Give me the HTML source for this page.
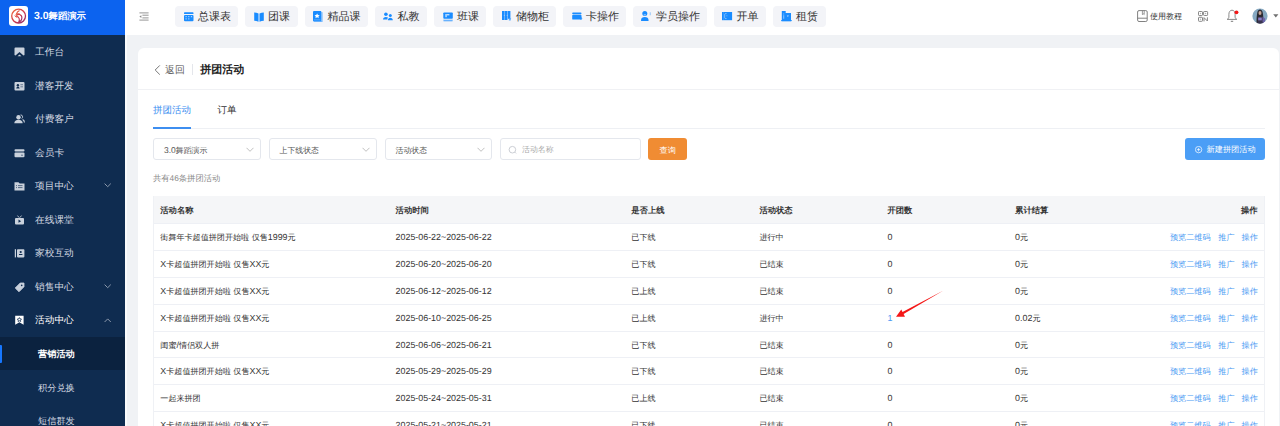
<!DOCTYPE html>
<html><head><meta charset="utf-8">
<style>
*{box-sizing:border-box;margin:0;padding:0}
i{font-style:normal}
html,body{width:1280px;height:426px;overflow:hidden;background:#f0f2f5;font-family:"Liberation Sans",sans-serif;color:#333;text-rendering:geometricPrecision}
#side{position:absolute;left:0;top:0;width:125px;height:426px;background:#0f2c50;overflow:hidden}
#logo{position:absolute;left:0;top:0;width:125px;height:35px;background:#0c63ef}
#logo .ic{position:absolute;left:9px;top:6px;width:19px;height:20px;background:#fff;border-radius:3px}
#logo .t{position:absolute;left:34px;top:8px;font-size:10.5px;font-weight:bold;color:#fff;line-height:16px;white-space:nowrap}
.mi{position:absolute;left:0;width:125px;height:33.55px;color:#d3d9e2;font-size:9.7px;font-weight:500;line-height:35.5px;white-space:nowrap}
.mi .tx{position:absolute;left:35px;top:0}
.mi svg{position:absolute;left:13.5px;top:12px}
.mi .chev{position:absolute;left:104.2px;top:14.2px}
.mi.sub .tx{left:38px;font-size:9.2px}
.mi.active{background:#0b223f;color:#fff;font-weight:bold}
.mi.active:before{content:"";position:absolute;left:0;top:8px;width:2px;height:18px;background:#1677ff;border-radius:0 1px 1px 0}
.mi.open{color:#fff}
#top{position:absolute;left:125px;top:0;width:1155px;height:35px;background:#fff}
#top:before{content:"";position:absolute;left:0;top:0;width:2px;height:35px;background:#fff}
.tab{position:absolute;top:6px;height:21px;background:#f3f4f8;border-radius:4px;font-size:11px;line-height:23px;color:#333;white-space:nowrap}
.tab svg{position:absolute;left:9px;top:5.5px}
.tab .tx{position:absolute;left:23px;top:0}
#card{position:absolute;left:138px;top:48px;width:1141px;height:400px;background:#fff;border-radius:6px}
.sel{position:absolute;top:138px;height:22px;border:1px solid #e4e7ed;border-radius:3px;background:#fff;font-size:8.5px;line-height:22px;color:#555;white-space:nowrap}
.sel .tx{position:absolute;left:10px;top:0}
.sel svg{position:absolute;right:6px;top:7.5px}
.row{position:absolute;left:153px;width:1112px;height:27px;border-top:1px solid #eef0f5;font-size:8.9px;line-height:26px;color:#333;white-space:nowrap}
.row span{position:absolute;top:0}
.hdr{position:absolute;left:153px;top:196px;width:1112px;height:27px;background:#f5f6f8;font-size:8.3px;line-height:29.4px;font-weight:bold;color:#333;white-space:nowrap}
.hdr span{position:absolute;top:0}
.lk{color:#4a9af3}
</style></head><body>
<div id="side">
  <div id="logo"><div class="ic"><svg width="19" height="20" viewBox="0 0 19 20"><defs><linearGradient id="lg" x1="0" y1="0" x2="1" y2="1"><stop offset="0" stop-color="#f06a3a"/><stop offset="0.5" stop-color="#d23a4a"/><stop offset="1" stop-color="#8a2a70"/></linearGradient></defs><circle cx="9.6" cy="10.1" r="6.9" stroke="url(#lg)" stroke-width="1.3" fill="none"/><path d="M10.5 4.6c-1.6 0.8-2.6 2-3.2 3.6 1.2-0.3 2.4-0.4 3.4-0.1-1.4 0.2-2.8 0.9-3.6 1.9 1.5 0.2 2.7 1.1 3.1 2.6 0.3 1.2 0 2.6-0.6 3.6 1.8-0.6 3.2-2.2 3.3-4.2 0.1-1.6-0.8-3-2.2-3.6" stroke="url(#lg)" stroke-width="1.1" fill="none"/><path d="M5.8 9.6c0.6 1 1.6 1.6 2.6 1.6" stroke="#e04040" stroke-width="1" fill="none"/></svg></div><div class="t">3.0<i style="font-size:0.886em">舞蹈演示</i></div></div>

  <div class="mi" style="top:35.00px"><svg width="11" height="10" viewBox="0 0 11 10"><path d="M1.5 0.5h8a1 1 0 0 1 1 1v6.5l-1 0.5-4-3.6-4 3.6-1-0.5v-6.5a1 1 0 0 1 1-1z" fill="#c9d1dc"/><path d="M3.6 9.2l1.9-1.8 1.9 1.8z" fill="#c9d1dc"/></svg><span class="tx">工作台</span></div>
  <div class="mi" style="top:68.55px"><svg width="11" height="10" viewBox="0 0 11 10"><rect x="0.5" y="1" width="10" height="8.5" rx="1" fill="#c9d1dc"/><circle cx="3.9" cy="4.2" r="1.2" fill="#0f2c50"/><path d="M2.2 7.6c0.2-1.5 1-2.2 1.7-2.2s1.5 0.7 1.7 2.2z" fill="#0f2c50"/><rect x="6.4" y="3.2" width="2.6" height="1" fill="#0f2c50" opacity=".5"/><rect x="6.4" y="5.3" width="2.6" height="1" fill="#0f2c50" opacity=".5"/></svg><span class="tx">潜客开发</span></div>
  <div class="mi" style="top:102.10px"><svg width="11" height="10" viewBox="0 0 11 10"><circle cx="4.5" cy="3.3" r="2.2" fill="#c9d1dc"/><path d="M0.3 9.3c0-2.2 1.8-3.5 4.2-3.5s4.2 1.3 4.2 3.5z" fill="#c9d1dc"/><path d="M6.6 0.9a2 2 0 0 1 1.2 3.6" stroke="#c9d1dc" stroke-width="1" fill="none"/><path d="M8.6 5.6c1.1 0.5 1.8 1.5 1.8 3" stroke="#c9d1dc" stroke-width="1.1" fill="none"/></svg><span class="tx">付费客户</span></div>
  <div class="mi" style="top:135.65px"><svg width="11" height="10" viewBox="0 0 11 10"><rect x="0.5" y="1.3" width="10" height="2.2" rx="1" fill="#c9d1dc"/><rect x="0.5" y="4.6" width="10" height="4.6" rx="1" fill="#c9d1dc"/><circle cx="8" cy="7.2" r="0.6" fill="#0f2c50"/></svg><span class="tx">会员卡</span></div>
  <div class="mi" style="top:169.20px"><svg width="11" height="10" viewBox="0 0 11 10"><path d="M0.5 1.2h4l1.2 1.2h4.8v7.2h-10z" fill="#c9d1dc"/><rect x="2" y="4.2" width="1" height="0.9" fill="#0f2c50" opacity=".7"/><rect x="4" y="4.2" width="4.5" height="0.9" fill="#0f2c50" opacity=".7"/><rect x="2" y="6.2" width="1" height="0.9" fill="#0f2c50" opacity=".7"/><rect x="4" y="6.2" width="4.5" height="0.9" fill="#0f2c50" opacity=".7"/></svg><span class="tx">项目中心</span><svg class="chev" width="8" height="5" viewBox="0 0 8 5"><path d="M0.6 0.6l3.1 3.1 3.1-3.1" stroke="#9aa6b8" stroke-width="0.9" fill="none"/></svg></div>
  <div class="mi" style="top:202.75px"><svg width="11" height="10" viewBox="0 0 11 10"><rect x="1" y="3" width="9" height="6.5" rx="1" fill="#c9d1dc"/><path d="M3.5 0.6l1.6 2M7.5 0.6l-1.6 2" stroke="#c9d1dc" stroke-width="0.9"/><path d="M4.5 4.6v3.2l2.6-1.6z" fill="#0f2c50"/></svg><span class="tx">在线课堂</span></div>
  <div class="mi" style="top:236.30px"><svg width="11" height="10" viewBox="0 0 11 10"><rect x="0.8" y="1.2" width="1.2" height="8.2" fill="#c9d1dc"/><rect x="3" y="1.2" width="7.4" height="8.2" rx="0.8" fill="#c9d1dc"/><circle cx="6.7" cy="4" r="1.1" fill="#0f2c50"/><rect x="5" y="6" width="3.4" height="1" fill="#0f2c50"/></svg><span class="tx">家校互动</span></div>
  <div class="mi" style="top:269.85px"><svg width="11" height="10" viewBox="0 0 11 10"><path d="M6.2 1h3.8v3.8l-5 5-3.8-3.8z" fill="#c9d1dc" stroke="#c9d1dc" stroke-width="0.8" stroke-linejoin="round"/><circle cx="7.7" cy="3.4" r="0.8" fill="#0f2c50"/></svg><span class="tx">销售中心</span><svg class="chev" width="8" height="5" viewBox="0 0 8 5"><path d="M0.6 0.6l3.1 3.1 3.1-3.1" stroke="#9aa6b8" stroke-width="0.9" fill="none"/></svg></div>
  <div class="mi open" style="top:303.40px"><svg width="11" height="10" viewBox="0 0 11 10"><path d="M1.2 0.8h8.4v9l-4.2-2.6-4.2 2.6z" fill="#fff"/><path d="M5.4 2.6l0.7 1.3 1.4 0.2-1 1 0.2 1.4-1.3-0.7-1.3 0.7 0.2-1.4-1-1 1.4-0.2z" fill="none" stroke="#0f2c50" stroke-width="0.8"/></svg><span class="tx">活动中心</span><svg class="chev" width="8" height="5" viewBox="0 0 8 5" style="top:14.4px"><path d="M0.6 4l3.1-3.1 3.1 3.1" stroke="#9aa6b8" stroke-width="0.9" fill="none"/></svg></div>
  <div class="mi active sub" style="top:336.95px"><span class="tx">营销活动</span></div>
  <div class="mi sub" style="top:370.50px"><span class="tx">积分兑换</span></div>
  <div class="mi sub" style="top:404.05px"><span class="tx">短信群发</span></div>
</div>
<div id="top">
<svg style="position:absolute;left:13.5px;top:11.5px" width="11" height="10" viewBox="0 0 11 10"><path d="M0.4 0.9h9.2M3.4 3.2h6.2M3.4 5.9h6.2M0.4 8.1h9.2" stroke="#8a8a8a" stroke-width="0.9"/><path d="M0.4 4.6l2-1.3v2.6z" fill="#8a8a8a"/></svg>
<div class="tab" style="left:50px;width:63px"><svg width="10" height="10" viewBox="0 0 10 10"><rect x="0" y="0.3" width="9.5" height="1.8" rx="0.7" fill="#1a8cff"/><rect x="0" y="2.9" width="9.5" height="6.3" rx="1" fill="#1a8cff"/><g fill="#fff" opacity=".75"><rect x="1.5" y="4.2" width="1.2" height="1"/><rect x="4.2" y="4.2" width="1.2" height="1"/><rect x="6.9" y="4.2" width="1.2" height="1"/><rect x="1.5" y="6.4" width="1.2" height="1"/><rect x="4.2" y="6.4" width="1.2" height="1"/></g></svg><span class="tx">总课表</span></div>
<div class="tab" style="left:120px;width:52.5px"><svg width="10" height="10" viewBox="0 0 10 10"><path d="M0.2 0.6c1.4 0 3 0.3 4.3 1v8.2c-1.3-0.7-2.9-1-4.3-1z" fill="#1a8cff"/><path d="M9.8 0.6c-1.4 0-3 0.3-4.3 1v8.2c1.3-0.7 2.9-1 4.3-1z" fill="#1a8cff"/></svg><span class="tx">团课</span></div>
<div class="tab" style="left:179.5px;width:63px"><svg style="left:8.5px;top:4.6px" width="11" height="12" viewBox="0 0 11 12"><path d="M0 1a1 1 0 0 1 1-1h7.2v10.4h-7.2a1 1 0 0 1-1-1z" fill="#1a8cff"/><path d="M8.2 1h0.8a0.6 0.6 0 0 1 0.6 0.6v9.4h-8.6v-0.6h7.2z" fill="#1a8cff" opacity=".55"/><path d="M4.1 2.4l0.85 1.6 1.75 0.25-1.27 1.2 0.3 1.75-1.63-0.85-1.63 0.85 0.3-1.75-1.27-1.2 1.75-0.25z" fill="#fff"/><rect x="0.8" y="8.6" width="6.6" height="0.6" fill="#fff" opacity=".45"/></svg><span class="tx">精品课</span></div>
<div class="tab" style="left:249.5px;width:52.5px"><svg style="left:8px;top:5.8px" width="11" height="9" viewBox="0 0 11 9"><circle cx="2.9" cy="2.3" r="1.8" fill="#1a8cff"/><circle cx="7.3" cy="3.5" r="1.5" fill="#1a8cff"/><path d="M0 7.6c0-1.7 1.2-2.6 2.9-2.6 0.9 0 1.6 0.2 2.1 0.6-0.4 0.5-0.6 1.1-0.6 2z" fill="#1a8cff"/><path d="M4.9 8.2c0-1.6 1-2.5 2.4-2.5s2.5 0.9 2.5 2.5z" fill="#1a8cff"/></svg><span class="tx">私教</span></div>
<div class="tab" style="left:309px;width:52px"><svg width="10" height="10" viewBox="0 0 10 10"><rect x="0.3" y="0.5" width="9.5" height="6.2" rx="0.8" fill="#1a8cff"/><rect x="2.3" y="2" width="1.5" height="3.2" fill="#fff" opacity=".7"/><rect x="3.8" y="2" width="2.6" height="1.4" fill="#fff" opacity=".7"/><rect x="0.3" y="7.2" width="9.5" height="0.6" fill="#1a8cff" opacity=".35"/><rect x="0.3" y="8.3" width="9.5" height="0.9" rx="0.4" fill="#1a8cff" opacity=".85"/></svg><span class="tx">班课</span></div>
<div class="tab" style="left:368px;width:63px"><svg style="left:8.6px;top:5.4px" width="11" height="10" viewBox="0 0 11 10"><rect x="0" y="0" width="2.6" height="9" fill="#1a8cff"/><rect x="2.9" y="0" width="2.6" height="9" fill="#1a8cff"/><rect x="5.8" y="0" width="2.6" height="7.8" fill="#1a8cff"/><circle cx="2.2" cy="4.3" r="0.45" fill="#fff" opacity=".8"/><circle cx="5.1" cy="4.3" r="0.45" fill="#fff" opacity=".8"/><path d="M6.3 8.9l3-2.2-1 3z" fill="#1a8cff" opacity=".75"/></svg><span class="tx">储物柜</span></div>
<div class="tab" style="left:438px;width:63px"><svg width="11" height="10" viewBox="0 0 11 10"><rect x="0.2" y="0.6" width="9.3" height="1.6" rx="0.8" fill="#1a8cff"/><rect x="0.2" y="2.8" width="9.3" height="4.8" rx="0.9" fill="#1a8cff"/><circle cx="9" cy="6.5" r="1.2" fill="#1a8cff" opacity=".7"/></svg><span class="tx">卡操作</span></div>
<div class="tab" style="left:508px;width:73.5px"><svg style="left:8.1px;top:4.8px" width="11" height="11" viewBox="0 0 11 11"><circle cx="3.8" cy="2.6" r="2.5" fill="#1a8cff"/><path d="M2.6 3.2a1.2 1.2 0 0 0 2.4 0z" fill="#fff" opacity=".55"/><path d="M0 9.4c0-2.2 1.6-3.3 3.8-3.3s3.8 1.1 3.8 3.3a0.7 0.7 0 0 1-0.7 0.7h-6.2a0.7 0.7 0 0 1-0.7-0.7z" fill="#1a8cff"/><rect x="8.7" y="1.2" width="1.1" height="3" rx="0.3" fill="#1a8cff" opacity=".4"/></svg><span class="tx">学员操作</span></div>
<div class="tab" style="left:588.5px;width:52.5px"><svg style="left:8.5px;top:5.8px" width="11" height="9" viewBox="0 0 11 9"><rect x="0" y="0" width="10.1" height="8.2" fill="#1a8cff"/><path d="M4.6 1.6h-1a0.9 0.9 0 0 0-0.9 0.9v3.2a0.9 0.9 0 0 0 0.9 0.9h1" stroke="#fff" stroke-width="0.55" fill="none" opacity=".75"/><rect x="1.5" y="0" width="0.5" height="8.2" fill="#fff" opacity=".2"/><rect x="4.3" y="3.6" width="1.1" height="0.6" fill="#fff" opacity=".6"/></svg><span class="tx">开单</span></div>
<div class="tab" style="left:648px;width:52.5px"><svg style="left:8.1px;top:5px" width="12" height="11" viewBox="0 0 12 11"><path d="M0.8 0h3.9v2h5.3v8.3h-9.2z" fill="#1a8cff"/><rect x="0" y="9.2" width="10.9" height="0.9" fill="#1a8cff"/><rect x="2.3" y="2.6" width="0.9" height="0.8" fill="#fff" opacity=".7"/><rect x="2.3" y="4.2" width="0.9" height="3.6" fill="#fff" opacity=".55"/><path d="M5.8 4.4h2.1l-1.05 1.6z" fill="#fff" opacity=".7"/></svg><span class="tx">租赁</span></div>
<svg style="position:absolute;left:1012.3px;top:10px" width="12" height="13" viewBox="0 0 12 13"><rect x="0.6" y="0.6" width="9.6" height="10.9" rx="1.4" stroke="#7a7a7a" stroke-width="0.95" fill="none"/><path d="M0.6 8.2h9.6" stroke="#7a7a7a" stroke-width="0.95"/><path d="M5.4 0.8v3.8l0.9-0.8 0.9 0.8v-3.8" stroke="#7a7a7a" stroke-width="0.75" fill="none"/></svg>
<span style="position:absolute;left:1025px;top:9.8px;font-size:8px;line-height:14px;color:#333;white-space:nowrap">使用教程</span>
<svg style="position:absolute;left:1073.3px;top:10.5px" width="11" height="11" viewBox="0 0 11 11"><g stroke="#7f7f7f" stroke-width="0.95" fill="none"><rect x="0.5" y="0.5" width="4" height="4" rx="0.7"/><rect x="5.6" y="0.5" width="4" height="4" rx="0.7"/><rect x="0.5" y="6.3" width="4" height="4" rx="0.7"/><path d="M6 10.4V6.6L9.4 10V6.3"/></g><g fill="#7f7f7f" opacity=".6"><circle cx="2.5" cy="2.5" r="0.7"/><circle cx="7.6" cy="2.5" r="0.7"/><circle cx="2.5" cy="8.3" r="0.7"/></g></svg>
<svg style="position:absolute;left:1101px;top:9px" width="13" height="14" viewBox="0 0 13 14"><path d="M6 1.2C4 1.2 2.9 3 2.9 5.3V8C2.9 9 2.1 9.8 1.2 10.4H10.8C9.9 9.8 9.1 9 9.1 8V5.3C9.1 3 8 1.2 6 1.2z" stroke="#7a7a7a" stroke-width="0.9" fill="none" stroke-linejoin="round"/><path d="M4.8 12.3h2.4" stroke="#7a7a7a" stroke-width="1"/><circle cx="10.5" cy="3.3" r="1.9" fill="#f51818"/></svg>
<svg style="position:absolute;left:1127px;top:7.8px" width="16" height="16" viewBox="0 0 16 16"><defs><clipPath id="av"><circle cx="8" cy="8" r="7.6"/></clipPath></defs><g clip-path="url(#av)"><rect width="16" height="16" fill="#86a9c2"/><path d="M4.5 16c0-5 0.2-9 0.8-11.5C5.8 2.5 6.8 1.6 8 1.6s2.3 0.9 2.7 2.9c0.6 2.5 0.8 6.5 0.8 11.5z" fill="#2b2a33"/><ellipse cx="8" cy="5" rx="1.5" ry="2" fill="#c8a496"/><path d="M6.2 9.5h3.6v3.2h-3.6z" fill="#8a7cc8"/><path d="M10.5 8.5l2.8 2.2-1 5.3h-2z" fill="#6c62a8"/><path d="M4.8 16l1.4-3.4h3.6l1.4 3.4z" fill="#3a3550"/></g></svg>
<svg style="position:absolute;left:1147.5px;top:13.8px" width="6" height="5" viewBox="0 0 6 5"><path d="M0.2 0.2h5.2l-2.6 3.4z" fill="#707070"/></svg>

</div>
<div style="position:absolute;left:125px;top:35px;width:2px;height:391px;background:#fafbfc"></div>
<div id="card"></div>
<svg style="position:absolute;left:153.8px;top:64.5px" width="7" height="10" viewBox="0 0 7 10"><path d="M5.8 0.4l-4.6 4.6 4.6 4.6" stroke="#666" stroke-width="0.9" fill="none"/></svg>
<span style="position:absolute;left:165px;top:63.5px;font-size:9.9px;line-height:14px;color:#666;white-space:nowrap">返回</span>
<div style="position:absolute;left:192px;top:64px;width:1px;height:10.5px;background:#e4e6eb"></div>
<span style="position:absolute;left:200.3px;top:62px;font-size:11px;line-height:16px;color:#222;font-weight:bold;white-space:nowrap">拼团活动</span>
<div style="position:absolute;left:138px;top:89px;width:1141px;height:1px;background:#f0f1f4"></div>
<span style="position:absolute;left:153px;top:103.5px;font-size:9.5px;line-height:14px;color:#3d8ef0;white-space:nowrap">拼团活动</span>
<span style="position:absolute;left:217.5px;top:103.5px;font-size:9.5px;line-height:14px;color:#333;white-space:nowrap">订单</span>
<div style="position:absolute;left:153px;top:128px;width:1112px;height:1px;background:#eef0f4"></div>
<div style="position:absolute;left:153px;top:127px;width:38px;height:2px;background:#3d8ef0"></div>

<div class="sel" style="left:153px;width:108px"><span class="tx">3.0<i style="font-size:0.93em">舞蹈演示</i></span><svg width="8" height="6" viewBox="0 0 8 6"><path d="M0.5 0.8l3.5 3.5 3.5-3.5" stroke="#b0b0b0" stroke-width="0.8" fill="none"/></svg></div>
<div class="sel" style="left:268.5px;width:108px"><span class="tx"><i style="font-size:0.93em">上下线状态</i></span><svg width="8" height="6" viewBox="0 0 8 6"><path d="M0.5 0.8l3.5 3.5 3.5-3.5" stroke="#b0b0b0" stroke-width="0.8" fill="none"/></svg></div>
<div class="sel" style="left:384.5px;width:107.5px"><span class="tx"><i style="font-size:0.93em">活动状态</i></span><svg width="8" height="6" viewBox="0 0 8 6"><path d="M0.5 0.8l3.5 3.5 3.5-3.5" stroke="#b0b0b0" stroke-width="0.8" fill="none"/></svg></div>
<div class="sel" style="left:500px;width:140.5px"><svg style="position:absolute;left:7px;top:5.5px" width="10" height="10" viewBox="0 0 10 10"><circle cx="4.4" cy="4.7" r="3.3" stroke="#c2c5cc" stroke-width="0.85" fill="none"/><path d="M6.8 7.1l1.3 1.3" stroke="#c2c5cc" stroke-width="0.85"/></svg><span class="tx" style="left:21px;color:#aaa;font-size:7.9px">活动名称</span></div>
<div style="position:absolute;left:648.3px;top:138.3px;width:38.8px;height:21.5px;background:#f08c33;border-radius:3px;color:#fff;font-size:8.2px;font-weight:500;line-height:25.5px;text-align:center">查询</div>
<div style="position:absolute;left:1184.5px;top:138px;width:80.5px;height:22px;background:#4b9ef6;border-radius:3px;color:#fff;font-size:8.2px;line-height:22px;white-space:nowrap"><svg style="position:absolute;left:10px;top:8.2px" width="8" height="8" viewBox="0 0 8 8"><circle cx="3.6" cy="3.6" r="3.2" stroke="#fff" stroke-width="0.7" fill="none"/><path d="M3.6 1.9v3.4M1.9 3.6h3.4" stroke="#fff" stroke-width="0.7"/></svg><span style="position:absolute;left:22px;top:0.8px;font-weight:500">新建拼团活动</span></div>
<span style="position:absolute;left:153px;top:171px;font-size:8.3px;line-height:14px;color:#888;white-space:nowrap">共有46条拼团活动</span>

<div class="hdr"><span style="left:7.3px">活动名称</span><span style="left:242.6px">活动时间</span><span style="left:478.3px">是否上线</span><span style="left:606.4px">活动状态</span><span style="left:734.5px">开团数</span><span style="left:862.1px">累计结算</span><span style="right:7.5px">操作</span></div>
<div class="row" style="top:223.00px"><span style="left:7.3px"><i style="font-size:0.91em">街舞年卡超值拼团开始啦</i> <i style="font-size:0.91em">仅售</i>1999<i style="font-size:0.91em">元</i></span><span style="left:242.6px">2025-06-22~2025-06-22</span><span style="left:478.3px"><i style="font-size:0.91em">已下线</i></span><span style="left:606.4px"><i style="font-size:0.91em">进行中</i></span><span style="left:734.5px">0</span><span style="left:862.1px">0<i style="font-size:0.91em">元</i></span><span class="lk" style="left:1017px;top:0.8px;font-size:8.1px">预览二维码</span><span class="lk" style="left:1065.3px;top:0.8px;font-size:8.1px">推广</span><span class="lk" style="left:1088.6px;top:0.8px;font-size:8.1px">操作</span></div>
<div class="row" style="top:250.00px"><span style="left:7.3px">X<i style="font-size:0.91em">卡超值拼团开始啦</i> <i style="font-size:0.91em">仅售</i>XX<i style="font-size:0.91em">元</i></span><span style="left:242.6px">2025-06-20~2025-06-20</span><span style="left:478.3px"><i style="font-size:0.91em">已下线</i></span><span style="left:606.4px"><i style="font-size:0.91em">已结束</i></span><span style="left:734.5px">0</span><span style="left:862.1px">0<i style="font-size:0.91em">元</i></span><span class="lk" style="left:1017px;top:0.8px;font-size:8.1px">预览二维码</span><span class="lk" style="left:1065.3px;top:0.8px;font-size:8.1px">推广</span><span class="lk" style="left:1088.6px;top:0.8px;font-size:8.1px">操作</span></div>
<div class="row" style="top:277.00px"><span style="left:7.3px">X<i style="font-size:0.91em">卡超值拼团开始啦</i> <i style="font-size:0.91em">仅售</i>XX<i style="font-size:0.91em">元</i></span><span style="left:242.6px">2025-06-12~2025-06-12</span><span style="left:478.3px"><i style="font-size:0.91em">已上线</i></span><span style="left:606.4px"><i style="font-size:0.91em">已结束</i></span><span style="left:734.5px">0</span><span style="left:862.1px">0<i style="font-size:0.91em">元</i></span><span class="lk" style="left:1017px;top:0.8px;font-size:8.1px">预览二维码</span><span class="lk" style="left:1065.3px;top:0.8px;font-size:8.1px">推广</span><span class="lk" style="left:1088.6px;top:0.8px;font-size:8.1px">操作</span></div>
<div class="row" style="top:304.00px"><span style="left:7.3px">X<i style="font-size:0.91em">卡超值拼团开始啦</i> <i style="font-size:0.91em">仅售</i>XX<i style="font-size:0.91em">元</i></span><span style="left:242.6px">2025-06-10~2025-06-25</span><span style="left:478.3px"><i style="font-size:0.91em">已上线</i></span><span style="left:606.4px"><i style="font-size:0.91em">进行中</i></span><span class="lk" style="left:734.5px">1</span><span style="left:862.1px">0.02<i style="font-size:0.91em">元</i></span><span class="lk" style="left:1017px;top:0.8px;font-size:8.1px">预览二维码</span><span class="lk" style="left:1065.3px;top:0.8px;font-size:8.1px">推广</span><span class="lk" style="left:1088.6px;top:0.8px;font-size:8.1px">操作</span></div>
<div class="row" style="top:331.00px"><span style="left:7.3px"><i style="font-size:0.91em">闺蜜</i>/<i style="font-size:0.91em">情侣双人拼</i></span><span style="left:242.6px">2025-06-06~2025-06-21</span><span style="left:478.3px"><i style="font-size:0.91em">已下线</i></span><span style="left:606.4px"><i style="font-size:0.91em">已结束</i></span><span style="left:734.5px">0</span><span style="left:862.1px">0<i style="font-size:0.91em">元</i></span><span class="lk" style="left:1017px;top:0.8px;font-size:8.1px">预览二维码</span><span class="lk" style="left:1065.3px;top:0.8px;font-size:8.1px">推广</span><span class="lk" style="left:1088.6px;top:0.8px;font-size:8.1px">操作</span></div>
<div class="row" style="top:357.00px"><span style="left:7.3px">X<i style="font-size:0.91em">卡超值拼团开始啦</i> <i style="font-size:0.91em">仅售</i>XX<i style="font-size:0.91em">元</i></span><span style="left:242.6px">2025-05-29~2025-05-29</span><span style="left:478.3px"><i style="font-size:0.91em">已下线</i></span><span style="left:606.4px"><i style="font-size:0.91em">已结束</i></span><span style="left:734.5px">0</span><span style="left:862.1px">0<i style="font-size:0.91em">元</i></span><span class="lk" style="left:1017px;top:0.8px;font-size:8.1px">预览二维码</span><span class="lk" style="left:1065.3px;top:0.8px;font-size:8.1px">推广</span><span class="lk" style="left:1088.6px;top:0.8px;font-size:8.1px">操作</span></div>
<div class="row" style="top:384.00px"><span style="left:7.3px"><i style="font-size:0.91em">一起来拼团</i></span><span style="left:242.6px">2025-05-24~2025-05-31</span><span style="left:478.3px"><i style="font-size:0.91em">已上线</i></span><span style="left:606.4px"><i style="font-size:0.91em">已结束</i></span><span style="left:734.5px">0</span><span style="left:862.1px">0<i style="font-size:0.91em">元</i></span><span class="lk" style="left:1017px;top:0.8px;font-size:8.1px">预览二维码</span><span class="lk" style="left:1065.3px;top:0.8px;font-size:8.1px">推广</span><span class="lk" style="left:1088.6px;top:0.8px;font-size:8.1px">操作</span></div>
<div class="row" style="top:411.00px"><span style="left:7.3px">X<i style="font-size:0.91em">卡超值拼团开始啦</i> <i style="font-size:0.91em">仅售</i>XX<i style="font-size:0.91em">元</i></span><span style="left:242.6px">2025-05-21~2025-05-21</span><span style="left:478.3px"><i style="font-size:0.91em">已下线</i></span><span style="left:606.4px"><i style="font-size:0.91em">已结束</i></span><span style="left:734.5px">0</span><span style="left:862.1px">0<i style="font-size:0.91em">元</i></span><span class="lk" style="left:1017px;top:0.8px;font-size:8.1px">预览二维码</span><span class="lk" style="left:1065.3px;top:0.8px;font-size:8.1px">推广</span><span class="lk" style="left:1088.6px;top:0.8px;font-size:8.1px">操作</span></div>
<svg style="position:absolute;left:890px;top:288px" width="60" height="36" viewBox="0 0 60 36"><path d="M6 28.8L11.3 21.6L12.5 24L53.5 2.6L13.6 25.9L15 28.7z" fill="#f41818"/></svg>
<div style="position:absolute;left:153px;top:196px;width:1px;height:230px;background:#eff1f5"></div><div style="position:absolute;left:1264px;top:196px;width:1px;height:230px;background:#eff1f5"></div>
</body></html>
